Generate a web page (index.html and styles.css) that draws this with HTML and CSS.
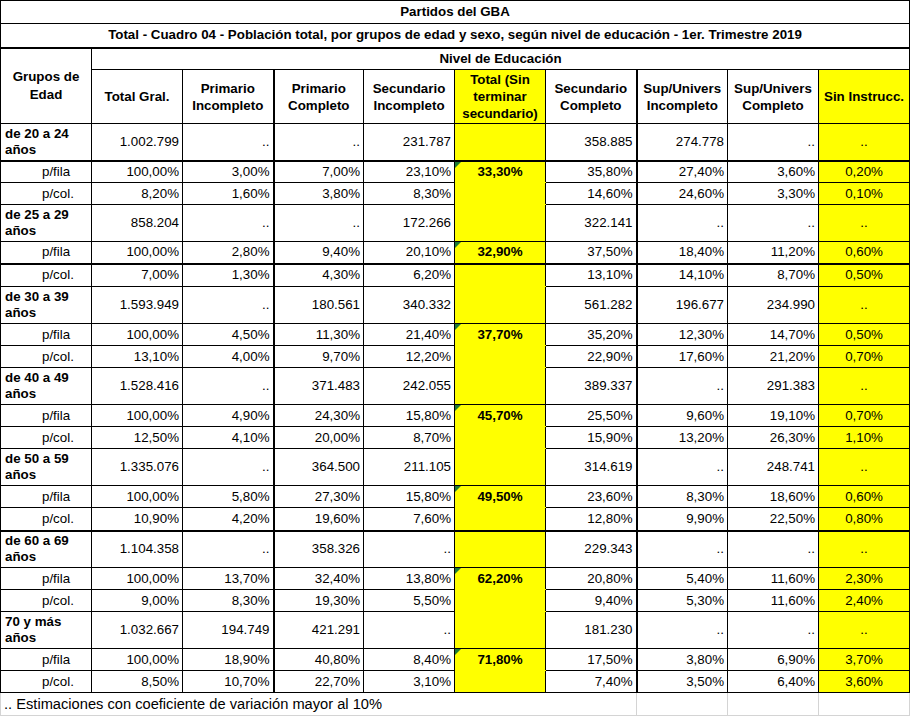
FILE: index.html
```html
<html>
  <head>
    <link rel="stylesheet" href="styles.css">
  </head>
  <body>
    <table class="sheet">
      <colgroup>
        <col class="c"><col class="c"><col class="c"><col class="c-narrow"><col class="c">
        <col class="c"><col class="c"><col class="c"><col class="c"><col class="c">
      </colgroup>

      <!-- titles -->
      <tr class="r-title"><td colspan="10" class="title">Partidos del GBA</td></tr>
      <tr class="r-title r-sub"><td colspan="10" class="title">Total - Cuadro 04 - Población total, por grupos de edad y sexo, según nivel de educación - 1er. Trimestre 2019</td></tr>

      <!-- column headers -->
      <tr class="r-nivel">
        <th rowspan="2" class="grp-head">Grupos de<br>Edad</th>
        <th colspan="9" class="nivel">Nivel de Educación</th>
      </tr>
      <tr class="r-head">
        <th>Total Gral.</th>
        <th class="tk">Primario<br>Incompleto</th>
        <th>Primario<br>Completo</th>
        <th>Secundario<br>Incompleto</th>
        <th class="yel">Total (Sin<br>terminar<br>secundario)</th>
        <th class="tk">Secundario<br>Completo</th>
        <th>Sup/Univers<br>Incompleto</th>
        <th>Sup/Univers<br>Completo</th>
        <th class="yel">Sin Instrucc.</th>
      </tr>

      <!-- de 20 a 24 -->
      <tr class="r-val">
        <td class="lbl">de 20 a 24<br>años</td>
        <td>1.002.799</td><td class="tk">..</td><td>..</td><td>231.787</td>
        <td class="yel tot"></td>
        <td class="tk">358.885</td><td>274.778</td><td>..</td><td class="yel ctr">..</td>
      </tr>
      <tr class="r-pct thick">
        <td class="sub">p/fila</td>
        <td>100,00%</td><td class="tk">3,00%</td><td>7,00%</td><td>23,10%</td>
        <td class="yel tot mark">33,30%</td>
        <td class="tk">35,80%</td><td>27,40%</td><td>3,60%</td><td class="yel ctr">0,20%</td>
      </tr>
      <tr class="r-pct">
        <td class="sub">p/col.</td>
        <td>8,20%</td><td class="tk">1,60%</td><td>3,80%</td><td>8,30%</td>
        <td class="yel tot"></td>
        <td class="tk">14,60%</td><td>24,60%</td><td>3,30%</td><td class="yel ctr">0,10%</td>
      </tr>

      <!-- de 25 a 29 -->
      <tr class="r-val">
        <td class="lbl">de 25 a 29<br>años</td>
        <td>858.204</td><td class="tk">..</td><td>..</td><td>172.266</td>
        <td class="yel tot"></td>
        <td class="tk">322.141</td><td>..</td><td>..</td><td class="yel ctr">..</td>
      </tr>
      <tr class="r-pct">
        <td class="sub">p/fila</td>
        <td>100,00%</td><td class="tk">2,80%</td><td>9,40%</td><td>20,10%</td>
        <td class="yel tot mark">32,90%</td>
        <td class="tk">37,50%</td><td>18,40%</td><td>11,20%</td><td class="yel ctr">0,60%</td>
      </tr>
      <tr class="r-pct thick tall">
        <td class="sub">p/col.</td>
        <td>7,00%</td><td class="tk">1,30%</td><td>4,30%</td><td>6,20%</td>
        <td class="yel tot"></td>
        <td class="tk">13,10%</td><td>14,10%</td><td>8,70%</td><td class="yel ctr">0,50%</td>
      </tr>

      <!-- de 30 a 39 -->
      <tr class="r-val">
        <td class="lbl">de 30 a 39<br>años</td>
        <td>1.593.949</td><td class="tk">..</td><td>180.561</td><td>340.332</td>
        <td class="yel tot"></td>
        <td class="tk">561.282</td><td>196.677</td><td>234.990</td><td class="yel ctr">..</td>
      </tr>
      <tr class="r-pct">
        <td class="sub">p/fila</td>
        <td>100,00%</td><td class="tk">4,50%</td><td>11,30%</td><td>21,40%</td>
        <td class="yel tot mark">37,70%</td>
        <td class="tk">35,20%</td><td>12,30%</td><td>14,70%</td><td class="yel ctr">0,50%</td>
      </tr>
      <tr class="r-pct">
        <td class="sub">p/col.</td>
        <td>13,10%</td><td class="tk">4,00%</td><td>9,70%</td><td>12,20%</td>
        <td class="yel tot"></td>
        <td class="tk">22,90%</td><td>17,60%</td><td>21,20%</td><td class="yel ctr">0,70%</td>
      </tr>

      <!-- de 40 a 49 -->
      <tr class="r-val">
        <td class="lbl">de 40 a 49<br>años</td>
        <td>1.528.416</td><td class="tk">..</td><td>371.483</td><td>242.055</td>
        <td class="yel tot"></td>
        <td class="tk">389.337</td><td>..</td><td>291.383</td><td class="yel ctr">..</td>
      </tr>
      <tr class="r-pct">
        <td class="sub">p/fila</td>
        <td>100,00%</td><td class="tk">4,90%</td><td>24,30%</td><td>15,80%</td>
        <td class="yel tot mark">45,70%</td>
        <td class="tk">25,50%</td><td>9,60%</td><td>19,10%</td><td class="yel ctr">0,70%</td>
      </tr>
      <tr class="r-pct">
        <td class="sub">p/col.</td>
        <td>12,50%</td><td class="tk">4,10%</td><td>20,00%</td><td>8,70%</td>
        <td class="yel tot"></td>
        <td class="tk">15,90%</td><td>13,20%</td><td>26,30%</td><td class="yel ctr">1,10%</td>
      </tr>

      <!-- de 50 a 59 -->
      <tr class="r-val">
        <td class="lbl">de 50 a 59<br>años</td>
        <td>1.335.076</td><td class="tk">..</td><td>364.500</td><td>211.105</td>
        <td class="yel tot"></td>
        <td class="tk">314.619</td><td>..</td><td>248.741</td><td class="yel ctr">..</td>
      </tr>
      <tr class="r-pct">
        <td class="sub">p/fila</td>
        <td>100,00%</td><td class="tk">5,80%</td><td>27,30%</td><td>15,80%</td>
        <td class="yel tot mark">49,50%</td>
        <td class="tk">23,60%</td><td>8,30%</td><td>18,60%</td><td class="yel ctr">0,60%</td>
      </tr>
      <tr class="r-pct tall">
        <td class="sub">p/col.</td>
        <td>10,90%</td><td class="tk">4,20%</td><td>19,60%</td><td>7,60%</td>
        <td class="yel tot"></td>
        <td class="tk">12,80%</td><td>9,90%</td><td>22,50%</td><td class="yel ctr">0,80%</td>
      </tr>

      <!-- de 60 a 69 -->
      <tr class="r-val thick">
        <td class="lbl">de 60 a 69<br>años</td>
        <td>1.104.358</td><td class="tk">..</td><td>358.326</td><td>..</td>
        <td class="yel tot"></td>
        <td class="tk">229.343</td><td>..</td><td>..</td><td class="yel ctr">..</td>
      </tr>
      <tr class="r-pct">
        <td class="sub">p/fila</td>
        <td>100,00%</td><td class="tk">13,70%</td><td>32,40%</td><td>13,80%</td>
        <td class="yel tot mark">62,20%</td>
        <td class="tk">20,80%</td><td>5,40%</td><td>11,60%</td><td class="yel ctr">2,30%</td>
      </tr>
      <tr class="r-pct">
        <td class="sub">p/col.</td>
        <td>9,00%</td><td class="tk">8,30%</td><td>19,30%</td><td>5,50%</td>
        <td class="yel tot"></td>
        <td class="tk">9,40%</td><td>5,30%</td><td>11,60%</td><td class="yel ctr">2,40%</td>
      </tr>

      <!-- 70 y mas -->
      <tr class="r-val">
        <td class="lbl">70 y más<br>años</td>
        <td>1.032.667</td><td class="tk">194.749</td><td>421.291</td><td>..</td>
        <td class="yel tot"></td>
        <td class="tk">181.230</td><td>..</td><td>..</td><td class="yel ctr">..</td>
      </tr>
      <tr class="r-pct">
        <td class="sub">p/fila</td>
        <td>100,00%</td><td class="tk">18,90%</td><td>40,80%</td><td>8,40%</td>
        <td class="yel tot mark">71,80%</td>
        <td class="tk">17,50%</td><td>3,80%</td><td>6,90%</td><td class="yel ctr">3,70%</td>
      </tr>
      <tr class="r-pct">
        <td class="sub">p/col.</td>
        <td>8,50%</td><td class="tk">10,70%</td><td>22,70%</td><td>3,10%</td>
        <td class="yel tot end"></td>
        <td class="tk">7,40%</td><td>3,50%</td><td>6,40%</td><td class="yel ctr">3,60%</td>
      </tr>

      <!-- footnote -->
      <tr class="r-note">
        <td colspan="7" class="note">.. Estimaciones con coeficiente de variación mayor al 10%</td>
        <td class="gap"></td><td class="gap"></td><td class="gap"></td>
      </tr>
    </table>
  </body>
</html>
```

FILE: styles.css
```css
body {
  margin: 0;
  background: #fff;
  color: #000;
}

.sheet {
  border-collapse: collapse;
  table-layout: fixed;
  width: 909px;
  font-family: "Liberation Sans", Arial, sans-serif;
  font-size: 13.33px;
  color: #000;
}

.c { width: 91px; }
.c-narrow { width: 90px; }

.sheet td,
.sheet th {
  border: 1px solid #000;
  padding: 0 3px;
  white-space: nowrap;
  overflow: hidden;
  text-align: right;
  vertical-align: middle;
  line-height: 16px;
}

/* titles */
.r-title { height: 23px; }
.r-sub { height: 24px; }
.r-sub td { border-bottom: 2px solid #000; }
.sheet .title {
  text-align: center;
  font-weight: bold;
}

/* header */
.r-nivel { height: 22px; }
.r-head { height: 54px; }
.sheet th {
  text-align: center;
  font-weight: bold;
  line-height: 17px;
}
.sheet .grp-head { line-height: 18px; }

/* body rows */
.r-val { height: 37px; }
.r-pct { height: 22px; }
.r-pct.tall { height: 23px; }
.sheet .thick td { border-top: 2px solid #000; }
.sheet .tk { border-right: 2px solid #000; }

.sheet .lbl {
  text-align: left;
  font-weight: bold;
  padding-left: 4px;
}
.sheet .sub {
  text-align: left;
  padding-left: 41px;
}

.sheet .yel { background: #ffff00; }
.sheet .ctr { text-align: center; }

/* "Total (Sin terminar secundario)" column: only the p/fila cells are boxed on top */
.sheet .tot {
  text-align: center;
  font-weight: bold;
  border-top-color: #ffff00;
  border-bottom-color: #ffff00;
}
.sheet .r-val .tot,
.sheet .tot.end { border-bottom-color: #000; }
.sheet .tot.mark { border-top-color: #000; }

/* green error marker in corner */
.sheet .mark { position: relative; }
.sheet .mark::before {
  content: "";
  position: absolute;
  left: 0;
  top: 0;
  border-top: 6px solid #1e7b34;
  border-right: 6px solid transparent;
}

/* footnote */
.r-note { height: 23px; }
.sheet .note {
  text-align: left;
  font-size: 14.67px;
  overflow: visible;
  border: 1px solid #d4d4d4;
  border-top: 1px solid #000;
}
.sheet .gap {
  border: 1px solid #d4d4d4;
  border-top: 1px solid #000;
}
```
